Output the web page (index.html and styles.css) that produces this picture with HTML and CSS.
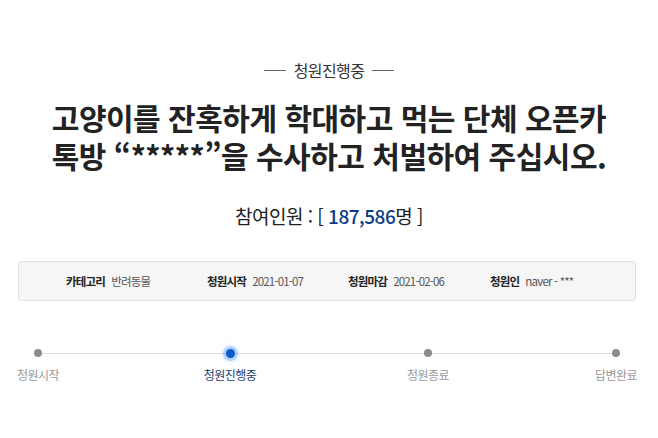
FILE: index.html
```html
<!DOCTYPE html>
<html lang="ko">
<head>
<meta charset="utf-8">
<link rel="stylesheet" href="styles.css">
</head>
<body>
<div class="page">
  <div class="status"><span class="dash"></span><span class="status-text">청원진행중</span><span class="dash"></span></div>
  <h1 class="title"><span class="line">고양이를 잔혹하게 학대하고 먹는 단체 오픈카</span><span class="line">톡방 “*****”을 수사하고 처벌하여 주십시오.</span></h1>
  <div class="count">참여인원 : [ <span class="num">187,586</span>명 ]</div>
  <div class="info">
    <div class="item"><span class="label">카테고리</span><span class="value">반려동물</span></div>
    <div class="item"><span class="label">청원시작</span><span class="value">2021-01-07</span></div>
    <div class="item"><span class="label">청원마감</span><span class="value">2021-02-06</span></div>
    <div class="item"><span class="label">청원인</span><span class="value">naver - ***</span></div>
  </div>
  <div class="progress">
    <div class="track"></div>
    <div class="steps">
      <div class="step"><span class="dot"></span><span class="step-label">청원시작</span></div>
      <div class="step active"><span class="dot"></span><span class="step-label">청원진행중</span></div>
      <div class="step"><span class="dot"></span><span class="step-label">청원종료</span></div>
      <div class="step"><span class="dot"></span><span class="step-label">답변완료</span></div>
    </div>
  </div>
</div>
</body>
</html>
```
FILE: styles.css
```css
html, body {
  margin: 0;
  padding: 0;
  background: #fff;
}
body {
  font-family: "Noto Sans CJK KR", "Noto Sans", sans-serif;
  color: #222;
}
.page {
  width: 658px;
  padding-top: 57px;
}
.status {
  display: flex;
  justify-content: center;
  align-items: center;
  gap: 8px;
  height: 26px;
}
.dash {
  width: 22px;
  height: 1px;
  background: #666;
}
.status-text {
  font-size: 16px;
  color: #333;
  letter-spacing: -0.6px;
}
.title {
  margin: 15px 0 0;
  text-align: center;
  font-size: 30px;
  font-weight: 700;
  line-height: 38px;
  letter-spacing: -0.5px;
  color: #222;
}
.line {
  display: block;
  height: 38px;
}
.count {
  margin-top: 29px;
  text-align: center;
  font-size: 19px;
  line-height: 26px;
  color: #222;
  letter-spacing: -0.5px;
}
.num {
  color: #0b3a8a;
  font-weight: 500;
}
.info {
  margin: 32px 22px 0 18px;
  height: 40px;
  box-sizing: border-box;
  border: 1px solid #e2e2e2;
  border-radius: 3px;
  background: #f6f6f6;
  display: grid;
  grid-template-columns: 141px 141px 142px auto;
  align-items: center;
  padding-left: 47px;
}
.item {
  display: flex;
  align-items: center;
  gap: 6px;
  font-size: 11.5px;
  letter-spacing: -0.8px;
}
.label {
  font-weight: 700;
  color: #222;
}
.value {
  color: #555;
}
.progress {
  position: relative;
  margin: 48px 0 0 38px;
}
.track {
  position: absolute;
  left: 0;
  width: 578px;
  top: 4px;
  height: 1px;
  background: #ddd;
}
.steps {
  display: grid;
  grid-template-columns: 192px 198px 188px 0;
  position: relative;
}
.step {
  width: 0;
  display: flex;
  flex-direction: column;
  align-items: center;
}
.dot {
  width: 8px;
  height: 8px;
  border-radius: 50%;
  background: #8c8c8c;
  flex: none;
}
.step.active .dot {
  width: 9px;
  height: 9px;
  margin-top: -0.5px;
  background: #0a5bc4;
  box-shadow: 0 0 0 3px rgba(80, 160, 255, 0.35), 0 0 5px 3px rgba(120, 180, 255, 0.35);
}
.step-label {
  margin-top: 9px;
  white-space: nowrap;
  font-size: 12px;
  color: #999;
  letter-spacing: -0.5px;
}
.step.active .step-label {
  margin-top: 8.5px;
  color: #1a3e72;
}
```
